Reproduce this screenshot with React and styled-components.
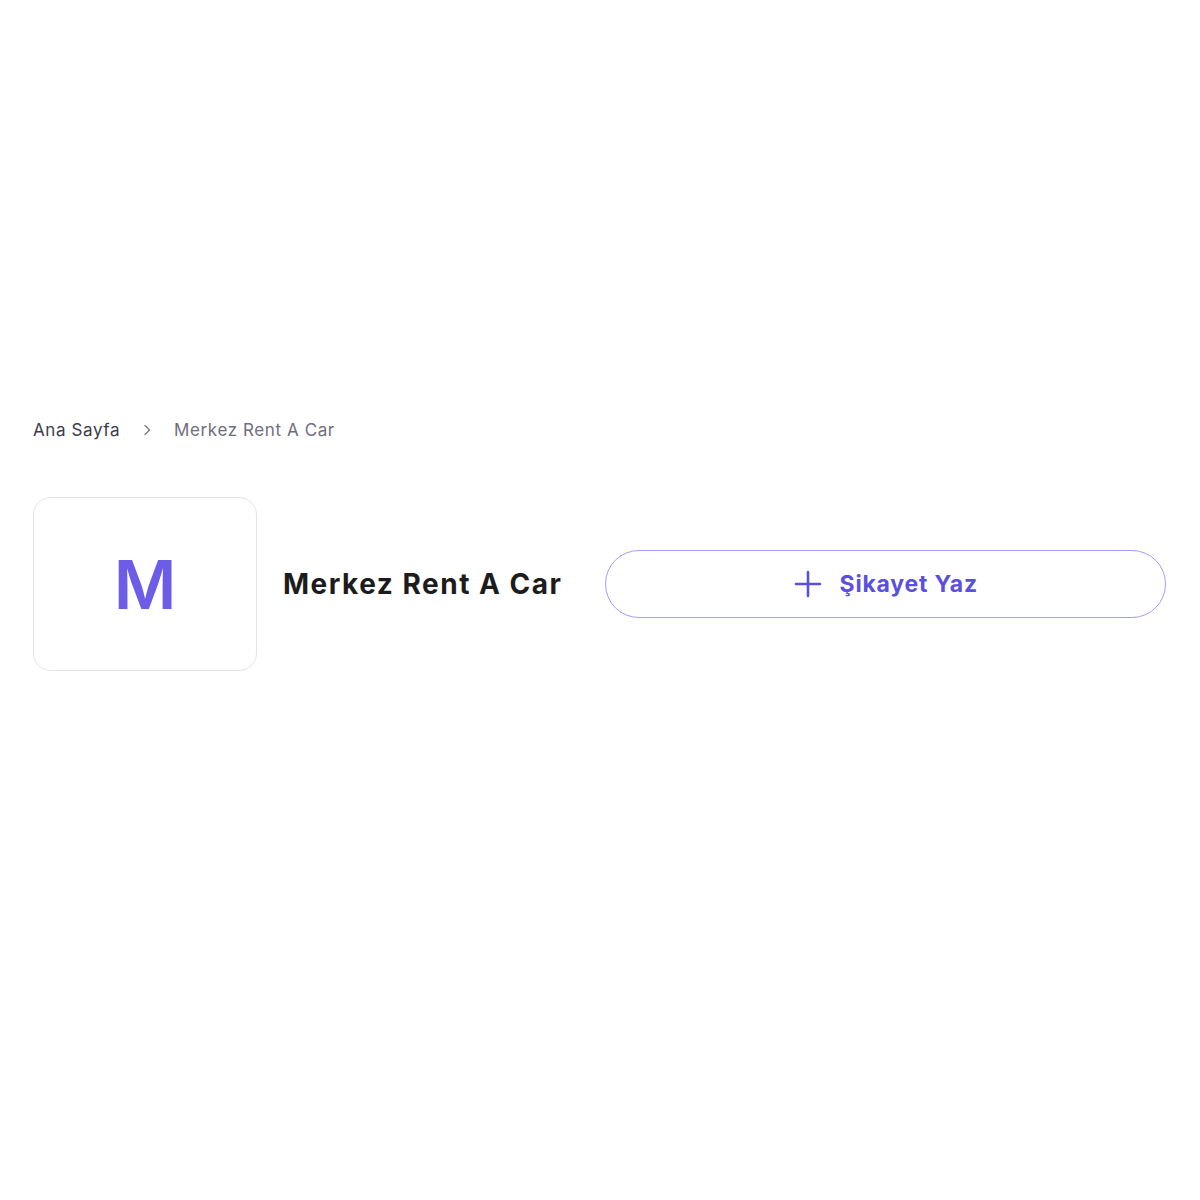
import React from "react";
import styled, { createGlobalStyle } from "styled-components";

const GlobalStyle = createGlobalStyle`
  body {
    margin: 0;
    background: #ffffff;
    font-family: "Inter", sans-serif;
  }
`;

const Page = styled.div`
  padding: 418px 34px 0 33px;
`;

const Breadcrumb = styled.nav`
  display: flex;
  align-items: center;
  gap: 22px;
  font-family: "Inter", sans-serif;
  font-size: 17px;
  letter-spacing: 0.6px;
  height: 24px;
`;

const Crumb = styled.span`
  color: ${(p) => (p.current ? "#6e6e7e" : "#3b3b4c")};
`;

const Header = styled.div`
  display: flex;
  align-items: center;
  margin-top: 55px;
`;

const LogoBox = styled.div`
  width: 222px;
  height: 172px;
  border: 1px solid #e3e3ea;
  border-radius: 18px;
  display: flex;
  align-items: center;
  justify-content: center;
  flex-shrink: 0;
`;

const Letter = styled.span`
  font-family: "Inter", sans-serif;
  font-size: 68px;
  font-weight: 600;
  color: #6c5ce7;
  line-height: 1;
`;

const Title = styled.h1`
  margin: 0 0 0 26px;
  font-family: "Inter", sans-serif;
  font-size: 28px;
  font-weight: 700;
  letter-spacing: 1.5px;
  color: #1c1c1c;
  white-space: nowrap;
`;

const ActionButton = styled.button`
  flex: 1;
  margin-left: 43px;
  height: 68px;
  border: 1.5px solid #a29dfb;
  border-radius: 34px;
  background: #ffffff;
  display: flex;
  align-items: center;
  justify-content: center;
  gap: 18px;
  color: #5b4fe0;
  font-family: "Inter", sans-serif;
  font-size: 23px;
  font-weight: 700;
  letter-spacing: 0.8px;
  cursor: pointer;
`;

const PlusIcon = () => (
  <svg width="28" height="28" viewBox="0 0 28 28" fill="none">
    <path d="M14 2v24M2 14h24" stroke="#5b4fe0" strokeWidth="2.6" strokeLinecap="round" />
  </svg>
);

const Chevron = () => (
  <svg width="10" height="12" viewBox="0 0 10 12" fill="none">
    <path d="M3 1.5l4.5 4.5L3 10.5" stroke="#7a7a88" strokeWidth="1.4" strokeLinecap="round" strokeLinejoin="round" />
  </svg>
);

export default function App() {
  return (
    <>
      <GlobalStyle />
      <Page>
        <Breadcrumb>
          <Crumb>Ana Sayfa</Crumb>
          <Chevron />
          <Crumb current>Merkez Rent A Car</Crumb>
        </Breadcrumb>
        <Header>
          <LogoBox>
            <Letter>M</Letter>
          </LogoBox>
          <Title>Merkez Rent A Car</Title>
          <ActionButton>
            <PlusIcon />
            Şikayet Yaz
          </ActionButton>
        </Header>
      </Page>
    </>
  );
}
